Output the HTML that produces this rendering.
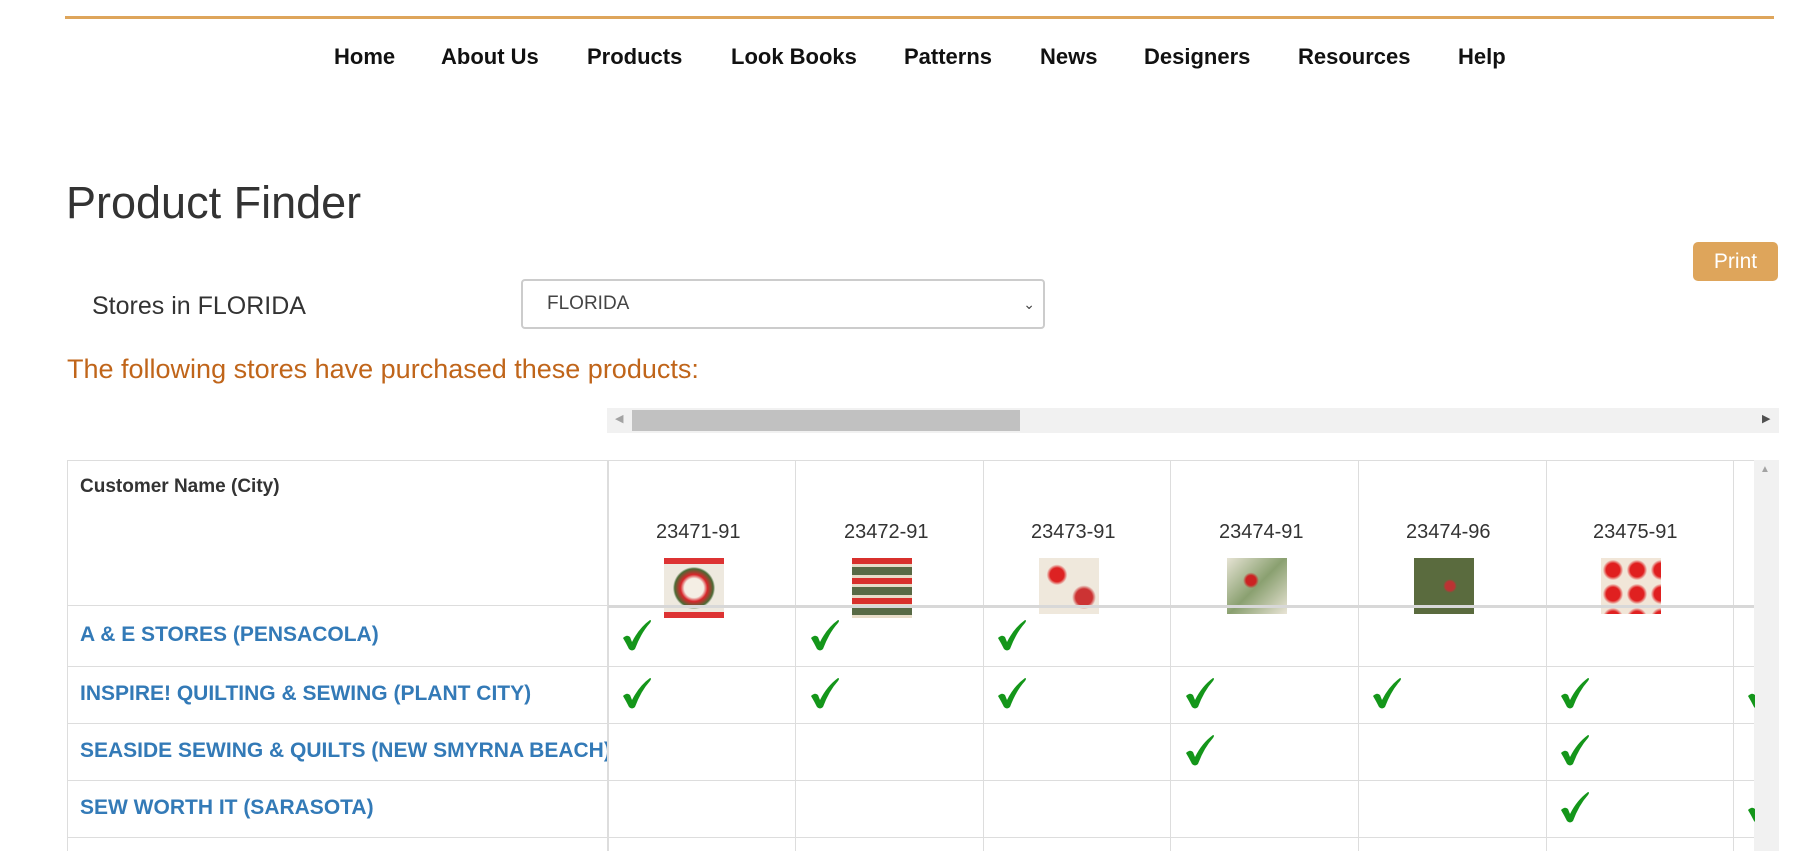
<!DOCTYPE html>
<html><head><meta charset="utf-8"><style>
*{margin:0;padding:0;box-sizing:border-box}
body{width:1806px;height:851px;overflow:hidden;background:#fff;font-family:"Liberation Sans",Arial,sans-serif;position:relative;color:#333}
.a{position:absolute;white-space:nowrap}
.nav{top:44px;font-weight:bold;font-size:22px;color:#111}
.v{position:absolute;width:1px;background:#ddd}
.h{position:absolute;height:1px;background:#ddd}
.code{font-size:20px;color:#333;top:521px}
.sw{position:absolute;top:558px;width:60px;height:60px}
.row{font-size:21px;font-weight:bold;color:#337ab7;left:80px}
.ck{position:absolute;width:30px;height:34px}
.cw{position:absolute;width:8px;height:34px;overflow:hidden}
</style></head><body>
<svg width="0" height="0" style="position:absolute"><defs><symbol id="c" viewBox="0 0 30 34"><path d="M1 20 Q5 16 8 19 L10 24 Q17 10 28 2 Q30 2 28 5 Q19 15 13 31 Q10 34 7 31 Q4 25 1 20 Z" fill="#14961a"/></symbol></defs></svg>
<div style="position:absolute;left:65px;top:16px;width:1709px;height:3px;background:#dea55b"></div>
<div class="a nav" style="left:334px">Home</div>
<div class="a nav" style="left:441px">About Us</div>
<div class="a nav" style="left:587px">Products</div>
<div class="a nav" style="left:731px">Look Books</div>
<div class="a nav" style="left:904px">Patterns</div>
<div class="a nav" style="left:1040px">News</div>
<div class="a nav" style="left:1144px">Designers</div>
<div class="a nav" style="left:1298px">Resources</div>
<div class="a nav" style="left:1458px">Help</div>

<div class="a" style="left:66px;top:177px;font-size:45px;color:#333">Product Finder</div>
<div class="a" style="left:1693px;top:242px;width:85px;height:39px;background:#dea55b;border-radius:5px;color:#fff;font-size:21px;text-align:center;line-height:39px">Print</div>
<div class="a" style="left:92px;top:292px;font-size:25px;color:#333">Stores in FLORIDA</div>
<div class="a" style="left:521px;top:279px;width:524px;height:50px;border:2px solid #ccc;border-radius:4px;font-size:19px;color:#444;line-height:46px;padding-left:24px">FLORIDA<span style="position:absolute;right:8px;top:0;font-size:14px">&#8964;</span></div>
<div class="a" style="left:67px;top:354px;font-size:27px;color:#c0651a">The following stores have purchased these products:</div>

<div class="a" style="left:607px;top:408px;width:1172px;height:25px;background:#f1f1f1"></div>
<div class="a" style="left:632px;top:410px;width:388px;height:21px;background:#c1c1c1"></div>
<div class="a" style="left:615px;top:412px;font-size:11px;color:#a3a3a3">&#9664;</div>
<div class="a" style="left:1762px;top:412px;font-size:11px;color:#505050">&#9654;</div>

<div class="h" style="left:67px;top:460px;width:1687px"></div>
<div class="a" style="left:1754px;top:460px;width:25px;height:391px;background:#f1f1f1"></div>
<div class="a" style="left:1760px;top:464px;font-size:10px;color:#a3a3a3">&#9650;</div>
<div class="v" style="left:67px;top:460px;height:391px"></div>
<div class="v" style="left:607px;top:460px;height:391px;width:2px"></div>
<div class="v" style="left:795px;top:460px;height:391px"></div>
<div class="v" style="left:983px;top:460px;height:391px"></div>
<div class="v" style="left:1170px;top:460px;height:391px"></div>
<div class="v" style="left:1358px;top:460px;height:391px"></div>
<div class="v" style="left:1546px;top:460px;height:391px"></div>
<div class="v" style="left:1733px;top:460px;height:391px"></div>
<div class="h" style="left:67px;top:605px;width:541px"></div>
<div class="h" style="left:67px;top:666px;width:1687px"></div>
<div class="h" style="left:67px;top:723px;width:1687px"></div>
<div class="h" style="left:67px;top:780px;width:1687px"></div>
<div class="h" style="left:67px;top:837px;width:1687px"></div>

<div class="a" style="left:80px;top:476px;font-size:19px;font-weight:bold;color:#333">Customer Name (City)</div>
<div class="a code" style="left:656px">23471-91</div>
<div class="a code" style="left:844px">23472-91</div>
<div class="a code" style="left:1031px">23473-91</div>
<div class="a code" style="left:1219px">23474-91</div>
<div class="a code" style="left:1406px">23474-96</div>
<div class="a code" style="left:1593px">23475-91</div>
<div class="sw" style="left:664px;background:radial-gradient(circle,#f4eee4 25%,#d8252a 35%,#4a6a35 50%,#eee9df 55%);border-top:6px solid #d33;border-bottom:6px solid #d33"></div>
<div class="sw" style="left:852px;background:repeating-linear-gradient(#d8302c 0 6px,#e8dcc8 6px 9px,#586a45 9px 17px,#e8dcc8 17px 20px)"></div>
<div class="sw" style="left:1039px;background:radial-gradient(circle at 30% 30%,#d22 12%,transparent 18%),radial-gradient(circle at 75% 70%,#c33 14%,transparent 20%),#efe8dc;height:56px"></div>
<div class="sw" style="left:1227px;background:radial-gradient(circle at 40% 40%,#c22 10%,transparent 16%),linear-gradient(135deg,#e6e3d4,#8aa070,#e9e4d6);height:56px"></div>
<div class="sw" style="left:1414px;background:radial-gradient(circle at 60% 50%,#b33 10%,transparent 15%),#5a6b3e;height:56px"></div>
<div class="sw" style="left:1601px;background:radial-gradient(circle,#e02020 40%,#f1e6d8 60%);background-size:24px 24px;height:56px"></div>
<div class="h" style="left:608px;top:605px;width:1146px;height:3px;background:#d8d8d8"></div>

<div class="a row" style="top:623px">A &amp; E STORES (PENSACOLA)</div>
<div class="a row" style="top:682px">INSPIRE! QUILTING &amp; SEWING (PLANT CITY)</div>
<div class="a row" style="top:739px;width:527px;overflow:hidden">SEASIDE SEWING &amp; QUILTS (NEW SMYRNA BEACH)</div>
<div class="a row" style="top:796px">SEW WORTH IT (SARASOTA)</div>

<svg class="ck" style="left:622px;top:618px"><use href="#c"/></svg>
<svg class="ck" style="left:810px;top:618px"><use href="#c"/></svg>
<svg class="ck" style="left:997px;top:618px"><use href="#c"/></svg>
<svg class="ck" style="left:622px;top:676px"><use href="#c"/></svg>
<svg class="ck" style="left:810px;top:676px"><use href="#c"/></svg>
<svg class="ck" style="left:997px;top:676px"><use href="#c"/></svg>
<svg class="ck" style="left:1185px;top:676px"><use href="#c"/></svg>
<svg class="ck" style="left:1372px;top:676px"><use href="#c"/></svg>
<svg class="ck" style="left:1560px;top:676px"><use href="#c"/></svg>
<div class="cw" style="left:1747px;top:676px"><svg width="30" height="34"><use href="#c"/></svg></div>
<svg class="ck" style="left:1185px;top:733px"><use href="#c"/></svg>
<svg class="ck" style="left:1560px;top:733px"><use href="#c"/></svg>
<svg class="ck" style="left:1560px;top:790px"><use href="#c"/></svg>
<div class="cw" style="left:1747px;top:790px"><svg width="30" height="34"><use href="#c"/></svg></div>
</body></html>
